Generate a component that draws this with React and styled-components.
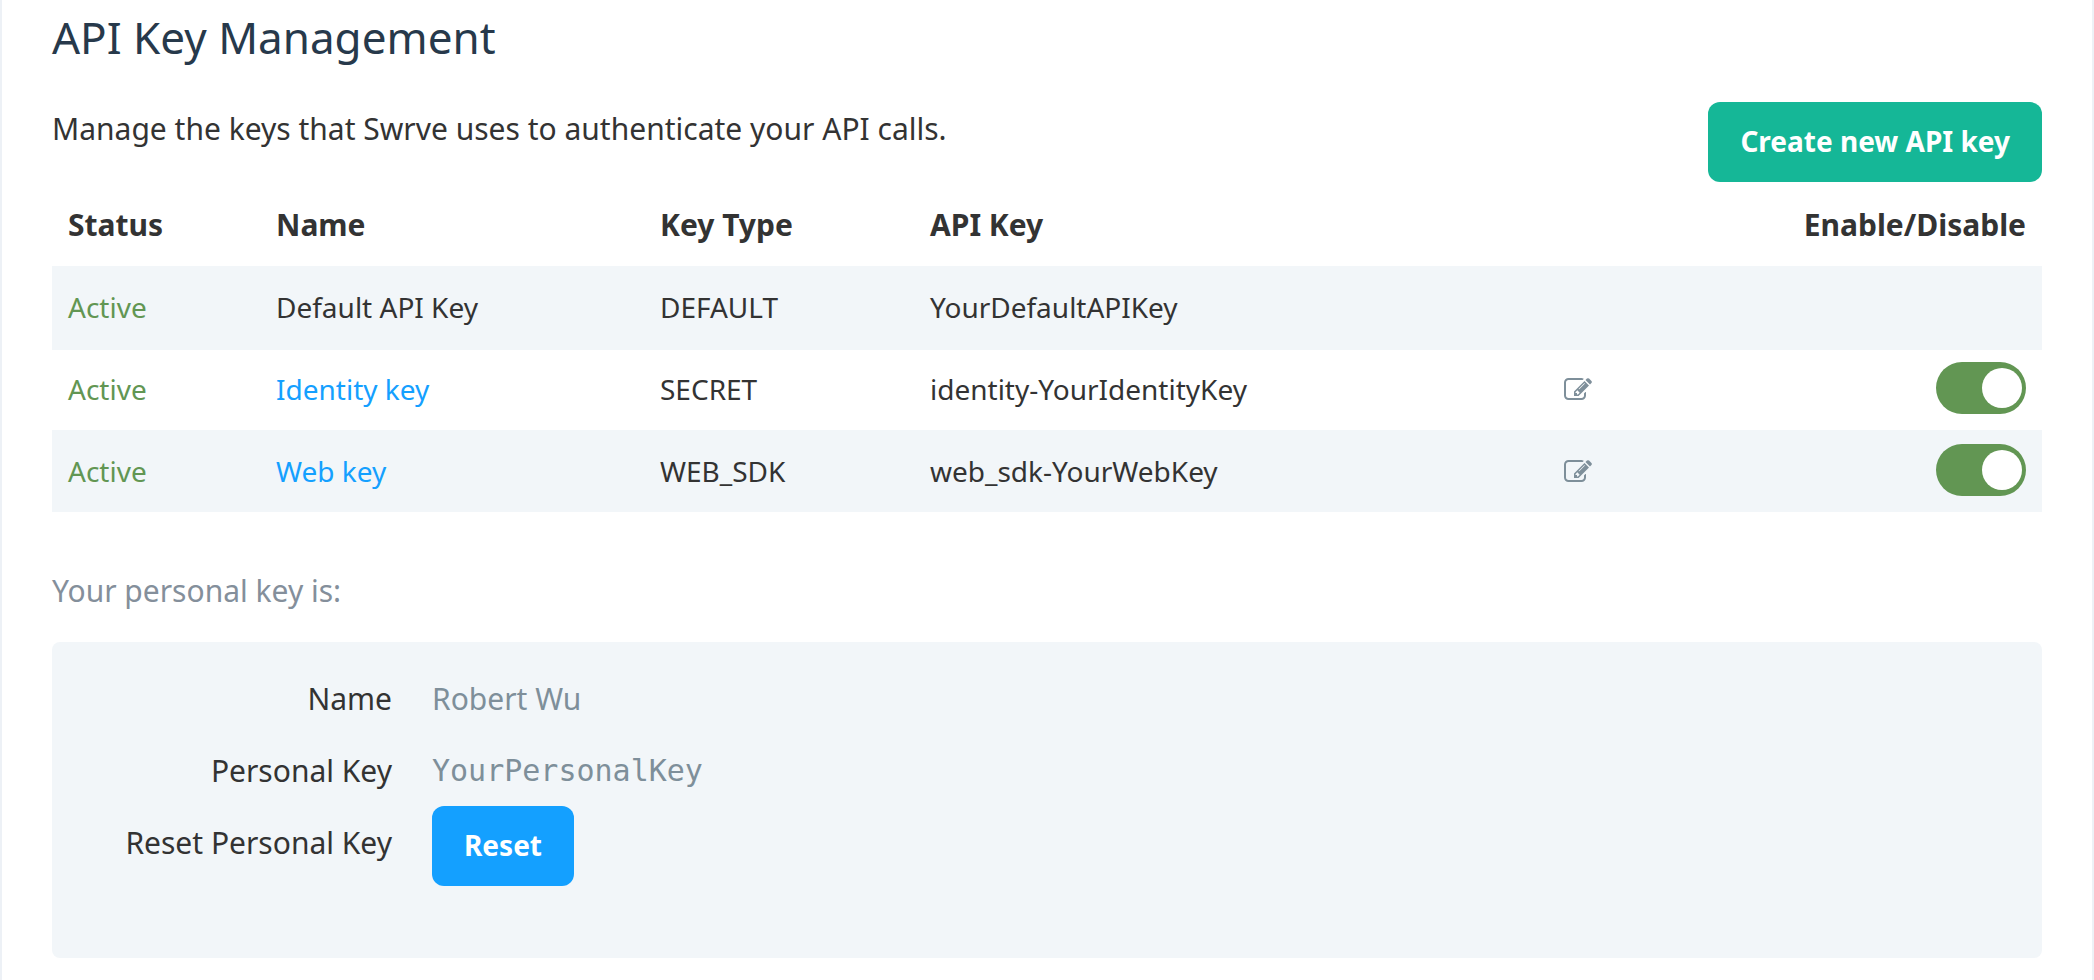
import React, { useState } from "react";
import styled, { createGlobalStyle } from "styled-components";

const color = {
  text: "#333333",
  heading: "#27394b",
  muted: "#848f9b",
  value: "#7e8f9a",
  active: "#629653",
  link: "#14a0ff",
  create: "#15b797",
  shade: "#f2f6f9",
  edge: "#edf1f6",
};

const GlobalStyle = createGlobalStyle`
  *, *::before, *::after { box-sizing: border-box; }
  body {
    margin: 0;
    background: #ffffff;
    color: ${color.text};
    font-family: "Noto Sans", "Open Sans", sans-serif;
    font-size: 30px;
    line-height: 40px;
  }
`;

const Page = styled.main`
  min-height: 100vh;
  padding: 8px 50px 22px;
  border: solid ${color.edge};
  border-width: 0 2px;
`;

const Title = styled.h1`
  margin: 0 0 36px;
  color: ${color.heading};
  font-size: 44px;
  font-weight: 400;
  line-height: 58px;
`;

const Intro = styled.div`
  display: flex;
  justify-content: space-between;
  align-items: flex-start;
  gap: 32px;
`;

const IntroText = styled.p`
  margin: 0;
  padding-top: 7px;
`;

const Button = styled.button`
  flex: none;
  padding: 19px 32px 21px;
  border: 0;
  border-radius: 12px;
  background: ${(p) => (p.$primary ? color.create : color.link)};
  color: #ffffff;
  font: inherit;
  font-size: 28px;
  font-weight: 700;
  line-height: 40px;
  cursor: pointer;
`;

const KeyTable = styled.table`
  width: 100%;
  table-layout: fixed;
  border-collapse: separate;
  border-spacing: 0;
`;

const Column = styled.col`
  width: ${(p) => p.$width};
`;

const HeadCell = styled.th`
  padding: 23px 16px 21px;
  text-align: ${(p) => p.$align || "left"};
  font-weight: 700;
`;

const KeyRow = styled.tr`
  &:nth-child(odd) {
    background: ${color.shade};
  }
`;

const Cell = styled.td`
  height: 82px;
  padding: 19px 16px 21px;
  border-top: 2px solid ${color.shade};
  font-size: 28px;
  vertical-align: top;
  color: ${(p) => (p.$active ? color.active : "inherit")};
`;

const ActionCell = styled(Cell)`
  padding: 12px 16px 16px;
`;

const Actions = styled.div`
  display: flex;
  justify-content: space-between;
  align-items: flex-start;
`;

const KeyLink = styled.a`
  color: ${color.link};
  text-decoration: none;
`;

const EditButton = styled.button`
  display: flex;
  padding: 14px 0 10px;
  border: 0;
  background: none;
  color: ${color.value};
  cursor: pointer;
`;

const Toggle = styled.input`
  display: flex;
  align-items: center;
  justify-content: flex-start;
  width: 90px;
  height: 52px;
  margin: 0;
  padding: 0 4px;
  appearance: none;
  border-radius: 26px;
  background: #b8c2ca;
  cursor: pointer;

  &::before {
    content: "";
    width: 40px;
    height: 40px;
    border-radius: 50%;
    background: #ffffff;
  }

  &:checked {
    justify-content: flex-end;
    background: ${color.active};
  }
`;

const PersonalHeading = styled.p`
  margin: 59px 0 31px;
  color: ${color.muted};
`;

const Panel = styled.dl`
  margin: 0;
  padding: 20px 0 72px;
  border-radius: 8px;
  background: ${color.shade};
`;

const Field = styled.div`
  display: grid;
  grid-template-columns: 340px 1fr;
  column-gap: 40px;
  align-items: start;
`;

const FieldName = styled.dt`
  padding: 17px 0 15px;
  text-align: right;
`;

const FieldValue = styled.dd`
  margin: 0;
  padding: ${(p) => (p.$control ? "0" : "17px 0 15px")};
  color: ${color.value};
  font-family: ${(p) =>
    p.$mono ? '"DejaVu Sans Mono", monospace' : "inherit"};
  display: flex;
`;

function EditIcon() {
  return (
    <svg width="28" height="28" viewBox="0 0 1792 1792" fill="currentColor" aria-hidden="true">
      <path d="M888 1184l116-116-152-152-116 116v56h96v96h56zm440-720q-16-16-33 1l-350 350q-17 17-1 33t33-1l350-350q17-17 1-33zm80 594v190q0 119-84.5 203.5t-203.5 84.5h-832q-119 0-203.5-84.5t-84.5-203.5v-832q0-119 84.5-203.5t203.5-84.5h832q63 0 117 25 15 7 18 23 3 17-9 29l-49 49q-14 14-32 8-23-6-45-6h-832q-66 0-113 47t-47 113v832q0 66 47 113t113 47h832q66 0 113-47t47-113v-126q0-13 9-22l64-64q15-15 35-7t20 29zm-96-738l288 288-672 672h-288v-288zm444 132l-92 92-288-288 92-92q28-28 68-28t68 28l152 152q28 28 28 68t-28 68z" />
    </svg>
  );
}

const keys = [
  { name: "Default API Key", type: "DEFAULT", value: "YourDefaultAPIKey", fixed: true },
  { name: "Identity key", type: "SECRET", value: "identity-YourIdentityKey" },
  { name: "Web key", type: "WEB_SDK", value: "web_sdk-YourWebKey" },
];

function ApiKeyRow({ item }) {
  const [enabled, setEnabled] = useState(true);
  return (
    <KeyRow>
      <Cell $active={enabled}>{enabled ? "Active" : "Inactive"}</Cell>
      <Cell>{item.fixed ? item.name : <KeyLink href="#">{item.name}</KeyLink>}</Cell>
      <Cell>{item.type}</Cell>
      <Cell>{item.value}</Cell>
      <ActionCell>
        {!item.fixed && (
          <Actions>
            <EditButton type="button" aria-label={`Edit ${item.name}`}>
              <EditIcon />
            </EditButton>
            <Toggle
              type="checkbox"
              role="switch"
              aria-label={`Enable ${item.name}`}
              checked={enabled}
              onChange={(e) => setEnabled(e.target.checked)}
            />
          </Actions>
        )}
      </ActionCell>
    </KeyRow>
  );
}

export default function App() {
  return (
    <>
      <GlobalStyle />
      <Page>
        <Title>API Key Management</Title>
        <Intro>
          <IntroText>Manage the keys that Swrve uses to authenticate your API calls.</IntroText>
          <Button type="button" $primary>Create new API key</Button>
        </Intro>
        <KeyTable>
          <colgroup>
            <Column $width="208px" />
            <Column $width="384px" />
            <Column $width="270px" />
            <Column $width="auto" />
            <Column $width="494px" />
          </colgroup>
          <thead>
            <tr>
              <HeadCell scope="col">Status</HeadCell>
              <HeadCell scope="col">Name</HeadCell>
              <HeadCell scope="col">Key Type</HeadCell>
              <HeadCell scope="col">API Key</HeadCell>
              <HeadCell scope="col" $align="right">Enable/Disable</HeadCell>
            </tr>
          </thead>
          <tbody>
            {keys.map((item) => (
              <ApiKeyRow key={item.name} item={item} />
            ))}
          </tbody>
        </KeyTable>
        <PersonalHeading>Your personal key is:</PersonalHeading>
        <Panel>
          <Field>
            <FieldName>Name</FieldName>
            <FieldValue>Robert Wu</FieldValue>
          </Field>
          <Field>
            <FieldName>Personal Key</FieldName>
            <FieldValue $mono>YourPersonalKey</FieldValue>
          </Field>
          <Field>
            <FieldName id="reset-label">Reset Personal Key</FieldName>
            <FieldValue $control>
              <Button type="button" aria-describedby="reset-label">Reset</Button>
            </FieldValue>
          </Field>
        </Panel>
      </Page>
    </>
  );
}
